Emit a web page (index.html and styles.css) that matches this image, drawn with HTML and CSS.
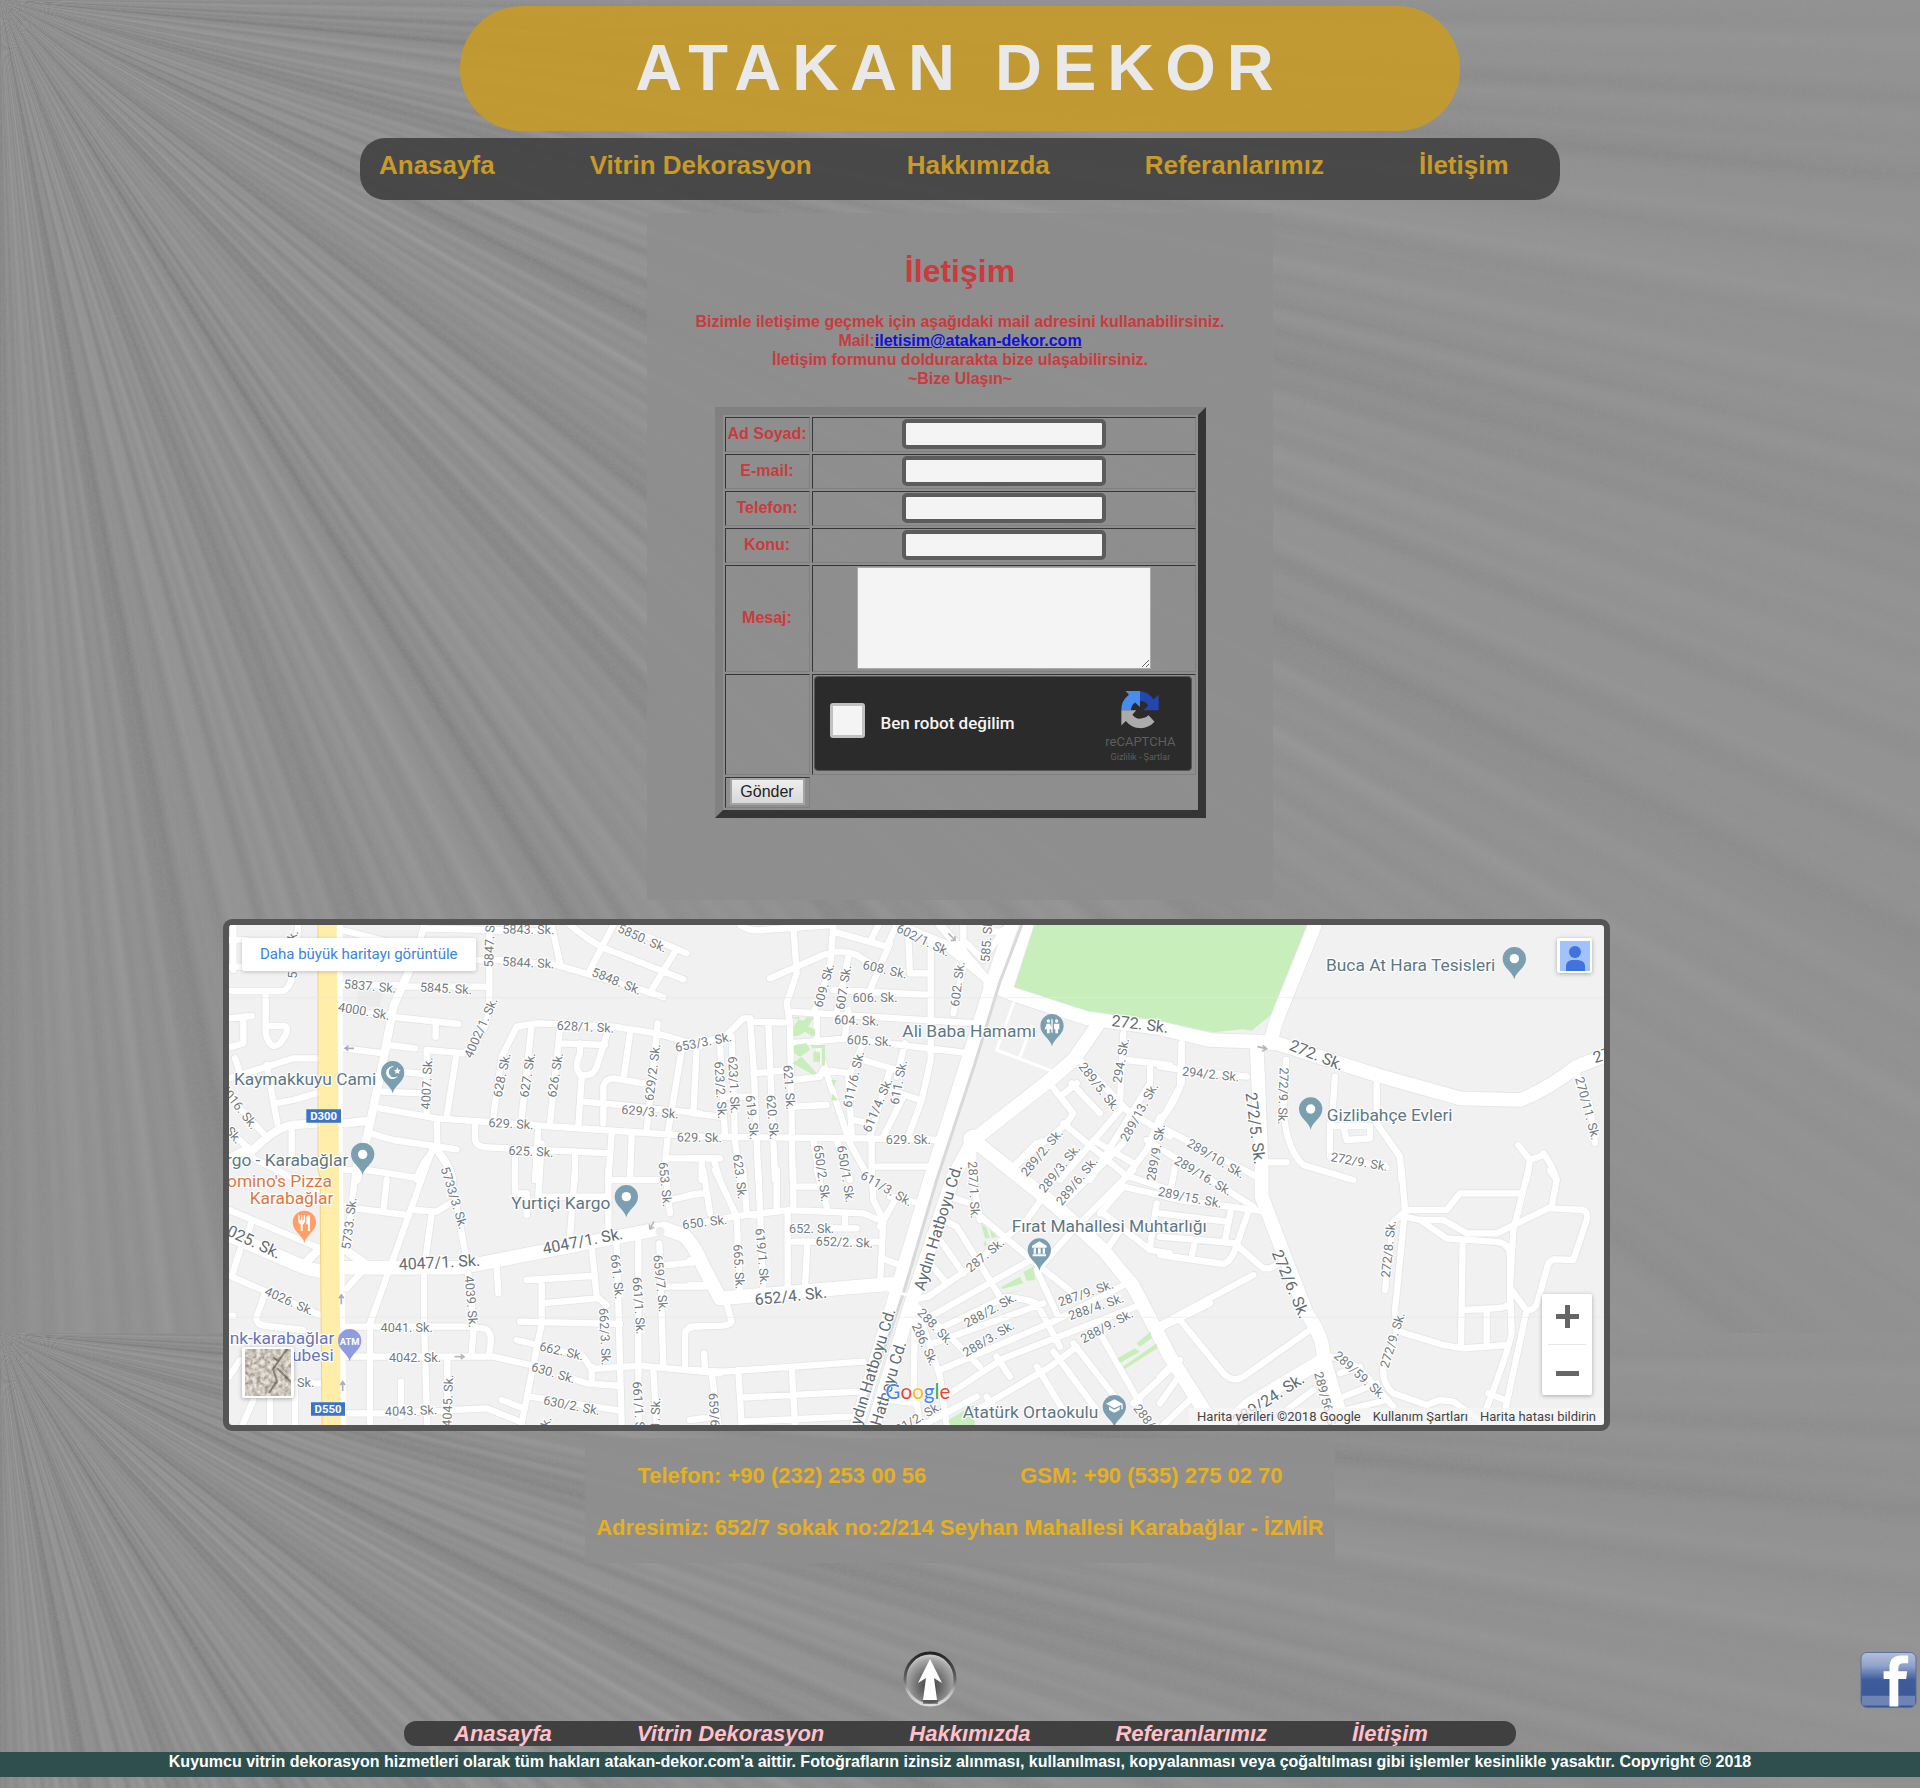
FILE: index.html
```html
<!DOCTYPE html>
<html lang="tr">
<head>
<meta charset="utf-8">
<title>Atakan Dekor - İletişim</title>
<link rel="stylesheet" href="styles.css">
</head>
<body>
<header class="banner"><h1>ATAKAN DEKOR</h1></header>

<nav class="main-nav">
  <a href="#">Anasayfa</a>
  <a href="#">Vitrin Dekorasyon</a>
  <a href="#">Hakkımızda</a>
  <a href="#">Referanlarımız</a>
  <a href="#">İletişim</a>
</nav>

<main>
  <section class="contact">
    <h2>İletişim</h2>
    <p>Bizimle iletişime geçmek için aşağıdaki mail adresini kullanabilirsiniz.<br>
    Mail:<a href="mailto:iletisim@atakan-dekor.com">iletisim@atakan-dekor.com</a><br>
    İletişim formunu doldurarakta bize ulaşabilirsiniz.<br>
    ~Bize Ulaşın~</p>
    <form>
      <table class="form-table">
        <tr><td class="name-cell"><label for="ad">Ad Soyad:</label></td><td class="field-cell"><input class="field" id="ad" type="text"></td></tr>
        <tr><td><label for="email">E-mail:</label></td><td><input class="field" id="email" type="text"></td></tr>
        <tr><td><label for="tel">Telefon:</label></td><td><input class="field" id="tel" type="text"></td></tr>
        <tr><td><label for="konu">Konu:</label></td><td><input class="field" id="konu" type="text"></td></tr>
        <tr class="message-row"><td><label for="mesaj">Mesaj:</label></td><td><textarea class="message" id="mesaj"></textarea></td></tr>
        <tr class="captcha-row"><td></td><td>
          <div class="captcha">
            <input type="checkbox" id="robot">
            <label for="robot">Ben robot değilim</label>
            <div class="captcha-brand">
              <svg viewBox="0 0 108 110" width="38" height="38" aria-hidden="true">
                <path fill="#4a8bee" d="M54 0H12L22 11A54 54 0 0 0 0 56H28A26 26 0 0 1 40 33L54 46Z"/>
                <path fill="#2546ad" d="M54 0A54 54 0 0 1 93 24L108 11V56H64L78 42Q70 29 54 29Z"/>
                <path fill="#ababab" d="M0 56H43L32 69Q44 84 60 79Q72 77 79 70L96 89A54 54 0 0 1 13 87L0 100Z"/>
              </svg>
              <span class="brand-name">reCAPTCHA</span>
              <span class="brand-terms">Gizlilik - Şartlar</span>
            </div>
          </div>
        </td></tr>
        <tr><td><button class="send" type="button">Gönder</button></td></tr>
      </table>
    </form>
  </section>

  <section class="map" aria-label="Harita">
    <svg class="map-canvas" viewBox="27 45 4125 1500" preserveAspectRatio="xMidYMid slice">
      <defs>
        <path id="pin" d="M0 62C-5 38-35 28-35 0A35 35 0 1 1 35 0C35 28 5 38 0 62Z"/>
        <g id="minor">
          <path d="M27 243H190Q215 230 220 180L235 45M27 90H80M40 45V180M27 170H70M137 243V370Q150 425 180 400Q220 345 185 348H140M27 325L95 318M70 320V400L27 412M27 505L220 445H296M45 445L60 490M140 465L172 640M165 580L220 570L296 548M27 560L130 670M27 660L85 715M215 650V740M80 735L190 790L300 840M365 60L560 110H600M612 45L590 130M615 55L1000 65M808 45V290Q800 380 730 430L620 420M770 150H840L1010 165L1250 235L1330 262M995 45L1020 160M1050 45Q1130 110 1180 125L1390 208M1180 45L1110 180M1260 70L1400 130M1365 125L1295 240M370 225H530M560 230H800M370 300L510 320L715 342M647 340V380M370 415L490 430M505 405L585 415M710 430L680 620M620 430V610M540 485L610 492M490 545L610 550M465 592L650 625L1150 660L1440 680M450 670L520 690L710 718M650 625L652 710Q600 760 590 810M645 710Q690 760 700 810M820 620L845 440L890 350L950 340L1180 350L1310 370L1440 408M935 345L905 620M1020 355L990 640M1020 400L1155 405M1080 400V430Q1060 480 1085 495Q1120 500 1130 470L1165 360M1085 500L1075 650M1230 370L1210 510M1313 340L1280 660M1090 575L1150 580L1440 610M1150 640V530Q1155 505 1180 505L1270 520M1385 420L1345 660L1330 810M765 640V690Q770 710 800 712L1170 730M955 650L945 810M885 730V810M1065 735V810M1175 670L1165 810M1235 675L1230 810M1340 745H1500"/>
          <path transform="translate(0 780)" d="M27 120L300 235M95 150L80 210M60 240L35 320L300 435M135 370L110 440Q105 465 140 468L250 480M27 437H40M370 470H740L790 475Q825 480 805 560M370 560H820L930 585M375 730H490L800 715L900 755M410 -30L380 240M500 30L490 125M375 0H440L600 25M640 -70L450 460V765M405 115L560 135M585 120L650 125L690 100M635 130L612 300V460L622 765M650 -60L690 0L740 270L762 460L755 550M830 290L835 370M885 0V70H920V135M1065 0L1050 200M965 -80L955 80H1160M1165 0V210M1170 30H1310M920 330L1115 318M1115 230L1130 380L1160 405M965 330V460L905 760M965 400L1130 385M900 455L1200 462M890 510L1090 560L1115 597M1115 597L1260 587L1500 610M1190 220L1205 765M1255 210V765M1318 220L1330 590M1115 590V635M1040 620L1100 640L1200 648M930 680L1200 722M845 690L910 715M1300 600L1310 765M1395 590V490Q1400 470 1440 468M1340 285L1440 275M1330 350H1470M682 570V765M543 635V740M150 690V765M225 650V765M100 690L70 760M27 620L60 570M380 355L440 290M1350 90L1440 70M1335 0L1350 130M230 640H305"/>
          <path transform="translate(1410 0)" d="M310 45L320 190L290 280L300 340L308 810M150 45Q180 65 220 60L420 45M240 205L400 135Q450 115 500 135L540 160M430 45L420 180L370 310M430 65L590 110L620 45M545 85L565 45M600 100L540 240M475 140L440 310M475 300L465 380M655 80L660 190H720M722 100V450L695 570L655 680M430 240L715 255M820 45V170L790 310M830 100L880 150L940 60M900 65H960M300 305L860 340M300 400L470 385L840 430M180 335L290 338M0 410L110 375L160 325H180L192 490L205 810M235 340L255 810M190 490L300 480M310 510L390 500L400 480L480 490M310 590L410 585M380 320V400L480 700L540 810M20 415L10 610L90 620M90 400L105 680M125 380L135 690L150 810M0 680L520 685L760 690M110 560H180M520 400L475 500L485 670M520 450L620 480M645 400L620 500M600 480L540 680M600 540L690 570M640 560L580 680M490 630L540 640M545 690V810M550 770H730M370 690L390 810M440 690L480 810M0 745H70L90 810M35 745V810M1075 515L1150 610L1130 640L960 780M1110 560L1160 520M1145 520L1230 610M1170 450L1310 600L1440 680M1290 600L1110 810M1310 450L1440 465M1300 370L1290 570M1380 470V520L1200 810M1120 640L1300 790M960 780L1040 700L1110 680M1210 690L1330 760M1410 620L1370 720L1300 810M850 700L850 810L870 930M1475 400V520L1410 640"/>
          <path transform="translate(1410 780)" d="M0 75L40 70M40 0L60 130M75 0L140 140L150 385M160 0L170 130M205 0L220 370M260 0V120M310 0V120M380 0L410 110M320 50H380M465 130V175H500M0 165L130 140L300 120L520 130L580 155L570 340M293 120V360M310 215H560M352 220L345 350M400 175H500M545 0L550 90L580 150M615 90L570 170M600 80L690 100M575 265L630 285M110 400L125 455Q120 465 100 467L0 470M0 600L100 605L520 575M42 550L45 600M65 610L85 765M145 600L155 765M305 590L315 765M155 683L500 665M155 755L480 740M0 750L80 740M0 345H50M0 270L30 265M690 385L715 380L830 300L1010 150L1060 80M760 150L800 170L930 380M750 210L820 310M720 280L770 340M780 80L840 100M860 130L1050 290L1150 370M1040 300L1100 430M720 440L1040 260M740 480L950 380L1010 390L1040 400L1110 530M730 520L1060 400M750 600L1090 455L1330 330M780 670L940 565L1350 405M670 400L760 480L870 590M675 420L670 700M690 440L750 620L770 765M600 690L680 700L690 765M860 720L1080 590L1160 530M920 560L960 620M1040 590L1120 720M1090 545L1220 720M1150 520L1290 700M1230 490L1350 700M1330 700L1470 570M1110 110L1300 -80M1060 280L1140 190L1330 0M1230 130L1300 50L1470 90M1240 130L1380 240L1440 250M1250 240L1290 180M1400 100L1380 230M1320 20L1440 60M890 680L920 730M700 765L860 680M1400 480L1560 400"/>
          <path transform="translate(2820 0)" d="M65 400L60 530Q40 590 0 630M0 470L75 480L260 500M378 450L370 600Q380 720 430 765L580 810M525 500L515 640M650 520V640L720 740L725 810M510 648H630V685L560 690L550 650M510 640V740L680 772M0 650L290 800M310 757H380M-40 690L200 840L280 890M1245 480L1290 590L1305 700M1075 705L1110 750L1150 735M1110 750L1100 810M1150 730Q1180 770 1190 810M45 770L30 850"/>
          <path transform="translate(2820 780)" d="M0 130L200 155M0 200L230 220M0 255L190 282Q215 275 230 225L270 110M105 210L95 260M215 110L195 210M60 90L320 125M230 225L310 295H330L350 285M0 465L280 315M60 450L190 610Q220 640 250 620L450 480M0 620L50 570M0 700L70 600M10 765L110 670M510 560Q580 570 620 620L700 710M540 610L600 590M550 680L650 640M560 720L680 690M470 600L510 765M380 720L460 660M725 0L735 120L705 420L710 490L670 590Q665 640 700 670L800 705L840 690L880 695L960 750M735 120H860L900 70H1085M735 125L700 155L675 360M735 140L780 150L860 205L1000 215Q1050 215 1050 260V400Q1040 415 1000 415L910 420M780 150H850L920 190H1010L1175 110L1190 30L1170 0M1105 0L1060 180L1050 350L1055 490Q1040 560 960 765M1175 115L1270 120Q1285 125 1280 150L1240 270L1180 268L1165 280L1130 405Q1110 430 1095 415L1055 360M1100 420L1040 700L1030 765M908 220L903 530M980 420V530M720 485L850 525L910 535L1040 525M985 670L1035 690"/>
        </g>
        <g id="medium">
          <path d="M590 130L520 290L490 450L450 640L410 810M85 735Q160 655 215 645L296 640M375 640L450 632M27 745L85 715M2160 45L2310 220M2035 45L2170 100L2310 215M260 1055L300 1015M370 1015L440 1065"/>
        </g>
        <g id="major">
          <path d="M27 975L260 1075L300 1083M370 1073H720L1310 958M1330 955L1390 975Q1420 1000 1450 1070L1500 1165L2030 1120M2375 45L2310 240L2130 810L1910 1545M2420 45L2355 245M2310 225L2385 255L2600 325L2820 355L2970 390L3110 395L3170 400L3470 495L3720 565L3900 570Q3980 540 4070 470L4160 435M2630 350L2560 450L2490 510L2260 690L2510 890L2650 1020L2740 1130L2850 1340L2980 1545M2260 690L2200 800L2080 1160L1960 1545M3285 45L3170 330L3150 400M3110 400L3125 780V860L3260 1210Q3310 1280 3310 1340L3370 1545M3310 1350L3090 1480L3020 1545"/>
          <circle cx="2260" cy="690" r="10"/>
        </g>
      </defs>
      <path class="park" d="M2435 45H3260L3165 305L3095 362L3070 358L2980 367L2820 335L2600 310L2380 240ZM2395 45H2410L2360 235L2345 225Z"/>
      <path class="block" d="M415 235H490L480 290H408Z"/>
      <use href="#minor" class="case case-minor"/>
      <use href="#medium" class="case case-medium"/>
      <use href="#major" class="case case-major"/>
      <use href="#minor" class="road road-minor"/>
      <use href="#medium" class="road road-medium"/>
      <use href="#major" class="road road-major"/>
      <g class="park">
        <path transform="translate(1410 0)" d="M302 322H330L310 350V378H325L345 365L365 378H375V358L355 350L372 322H350L340 332ZM312 405L350 400L360 420L330 440L312 430ZM365 405H405V465L395 470V415H365ZM370 425H390V455H370ZM307 460L335 440L380 490L370 495ZM425 510H440L430 530ZM425 550L445 570L425 572Z"/>
        <path transform="translate(1410 780)" d="M873 160L890 175L900 205H885ZM900 180L922 200L905 205ZM885 210L892 230L880 225ZM935 350L990 320L1000 340L935 358ZM1000 305L1030 290L1035 330L1010 332ZM940 372L1010 358L960 370ZM1282 565L1335 535L1350 545L1290 578ZM1340 520L1382 485L1385 505L1350 530ZM1298 590L1400 520L1402 535L1305 597ZM775 750L850 705L855 765H780Z"/>
      </g>
      <path class="rail" d="M2405 45L2340 215L2265 460L2150 810L2050 1150L1915 1545"/>
      <path class="road thin" d="M1985 1135L2100 1165M2380 280L2330 420L2500 485M2435 350L2400 440"/>
      <path class="road strip" d="M359 45V700L370 1545"/>
      <path fill="#ffeea9" d="M294 45H350L357 800L362 1545H306L300 800Z"/>
      <path class="orange" d="M294 45V780L300 800L306 1545"/>
      <path class="arrow" d="M402 415H375M385 408L375 415L385 422M364 1183V1155M357 1165L364 1155L371 1165M368 1443V1415M361 1425L368 1415L375 1425"/>
      <path class="arrow gray" d="M703 1340H732M722 1333L732 1340L722 1347M1302 935L1290 955M1288 943L1290 957L1302 952M2185 70L2205 90M2205 78V91H2192M3112 410L3138 416M3128 406L3140 416L3126 424"/>
      <circle class="island" cx="1320" cy="965" r="14"/>
      <path class="seam" d="M27 263H4152M27 1222H4152"/>

      <g class="street">
        <text transform="translate(925 58)rotate(1)">5843. Sk.</text><text transform="translate(1267 84)rotate(24)">5850. Sk.</text>
        <text transform="translate(925 158)rotate(3)">5844. Sk.</text><text transform="translate(808 94)rotate(-88)">5847. Sk.</text>
        <text transform="translate(218 75)rotate(-75)">k.</text><text transform="translate(217 195)rotate(-88)">5</text>
        <text transform="translate(450 228)rotate(5)">5837. Sk.</text><text transform="translate(678 235)rotate(3)">5845. Sk.</text>
        <text transform="translate(1190 213)rotate(22)">5848. Sk.</text><text transform="translate(432 303)rotate(10)">4000. Sk.</text>
        <text transform="translate(782 353)rotate(-66)">4002/1. Sk.</text><text transform="translate(1096 350)rotate(3)">628/1. Sk.</text>
        <text transform="translate(845 495)rotate(-78)">628. Sk.</text><text transform="translate(922 495)rotate(-81)">627. Sk.</text>
        <text transform="translate(1005 495)rotate(-81)">626. Sk.</text><text transform="translate(1297 487)rotate(-83)">629/2. Sk.</text>
        <text transform="translate(1290 605)rotate(5)">629/3. Sk.</text><text transform="translate(873 641)rotate(3)">629. Sk.</text>
        <text transform="translate(933 724)rotate(3)">625. Sk.</text><text transform="translate(620 520)rotate(-87)">4007. Sk.</text>
        <text transform="translate(57 590)rotate(52)">4016. Sk.</text><text transform="translate(42 675)rotate(50)">Sk.</text>
        <text transform="translate(1450 396)rotate(-11)">653/3. Sk.</text><text transform="translate(1438 682)rotate(1)">629. Sk.</text>
      </g>
      <g class="street" transform="translate(0 780)">
        <text transform="translate(703 83)rotate(73)">5733/3. Sk.</text><text transform="translate(387 160)rotate(-83)">5733. Sk.</text>
        <text transform="translate(1336 43)rotate(84)">653. Sk.</text><text transform="translate(1454 156)rotate(-7)">650. Sk.</text>
        <text transform="translate(208 393)rotate(24)">4026. Sk.</text><text transform="translate(560 472)">4041. Sk.</text>
        <text transform="translate(585 562)">4042. Sk.</text><text transform="translate(573 722)rotate(-2)">4043. Sk.</text>
        <text transform="translate(683 692)rotate(-88)">4045. Sk.</text><text transform="translate(754 395)rotate(85)">4039. Sk.</text>
        <text transform="translate(1192 320)rotate(84)">661. Sk.</text><text transform="translate(1257 407)rotate(86)">661/1. Sk.</text>
        <text transform="translate(1322 340)rotate(84)">659/7. Sk.</text><text transform="translate(1155 500)rotate(87)">662/3. Sk.</text>
        <text transform="translate(1025 543)rotate(13)">662. Sk.</text><text transform="translate(1000 608)rotate(17)">630. Sk.</text>
        <text transform="translate(1055 706)rotate(11)">630/2. Sk.</text><text transform="translate(1257 720)rotate(86)">661/1. Sk.</text>
        <text transform="translate(1305 750)rotate(-88)">661. Sk.</text><text transform="translate(978 755)rotate(-75)">k.</text>
        <text transform="translate(257 637)">Sk.</text>
      </g>
      <g class="street" transform="translate(1410 0)">
        <text transform="translate(700 90)rotate(26)">602/1. Sk.</text><text transform="translate(890 88)rotate(-86)">585. Sk.</text>
        <text transform="translate(585 178)rotate(13)">608. Sk.</text><text transform="translate(402 226)rotate(-74)">609. Sk.</text>
        <text transform="translate(460 232)rotate(-81)">607. Sk.</text><text transform="translate(555 263)">606. Sk.</text>
        <text transform="translate(802 222)rotate(-83)">602. Sk.</text><text transform="translate(500 331)rotate(2)">604. Sk.</text>
        <text transform="translate(538 392)rotate(3)">605. Sk.</text><text transform="translate(1292 452)rotate(-80)">294. Sk.</text>
        <text transform="translate(1228 530)rotate(52)">289/5. Sk.</text><text transform="translate(1347 606)rotate(-61)">289/13. Sk.</text>
        <text transform="translate(1055 727)rotate(-50)">289/2. Sk.</text><text transform="translate(1108 775)rotate(-51)">289/3. Sk.</text>
        <text transform="translate(1397 727)rotate(-80)">289/9. Sk.</text><text transform="translate(490 508)rotate(-77)">611/6. Sk.</text>
        <text transform="translate(562 585)rotate(-67)">611/4. Sk.</text><text transform="translate(625 517)rotate(-79)">611. Sk.</text>
        <text transform="translate(298 532)rotate(86)">621. Sk.</text><text transform="translate(248 622)rotate(85)">620. Sk.</text>
        <text transform="translate(187 622)rotate(84)">619. Sk.</text><text transform="translate(132 525)rotate(87)">623/1. Sk.</text>
        <text transform="translate(92 540)rotate(86)">623/2. Sk.</text><text transform="translate(655 688)">629. Sk.</text>
        <text transform="translate(150 800)rotate(83)">623. Sk.</text><text transform="translate(396 790)rotate(82)">650/2. Sk.</text>
        <text transform="translate(468 792)rotate(81)">650/1. Sk.</text>
      </g>
      <g class="street" transform="translate(1410 780)">
        <text transform="translate(590 55)rotate(30)">611/3. Sk.</text><text transform="translate(852 60)rotate(87)">287/1. Sk.</text>
        <text transform="translate(1160 33)rotate(-51)">289/6. Sk.</text><text transform="translate(365 175)">652. Sk.</text>
        <text transform="translate(463 216)rotate(2)">652/2. Sk.</text><text transform="translate(147 290)rotate(87)">665. Sk.</text>
        <text transform="translate(217 260)rotate(85)">619/1. Sk.</text><text transform="translate(885 255)rotate(-40)">287. Sk.</text>
        <text transform="translate(1187 369)rotate(-19)">287/9. Sk.</text><text transform="translate(1218 410)rotate(-19)">288/4. Sk.</text>
        <text transform="translate(1250 468)rotate(-28)">288/9. Sk.</text><text transform="translate(900 420)rotate(-29)">288/2. Sk.</text>
        <text transform="translate(895 506)rotate(-31)">288/3. Sk.</text><text transform="translate(737 470)rotate(46)">288. Sk.</text>
        <text transform="translate(705 523)rotate(65)">286. Sk.</text><text transform="translate(675 748)rotate(-30)">291/2. Sk.</text>
        <text transform="translate(75 755)rotate(86)">659/6. Sk.</text><text transform="translate(1392 775)rotate(52)">288/5. Sk.</text>
      </g>
      <g class="street" transform="translate(2820 0)">
        <text transform="translate(152 492)rotate(6)">294/2. Sk.</text><text transform="translate(370 558)rotate(92)">272/9. Sk.</text>
        <text transform="translate(168 745)rotate(31)">289/10. Sk.</text><text transform="translate(130 797)rotate(31)">289/16. Sk.</text>
        <text transform="translate(598 755)rotate(10)">272/9. Sk.</text><text transform="translate(1283 595)rotate(75)">270/11. Sk.</text>
      </g>
      <g class="street" transform="translate(2820 780)">
        <text transform="translate(90 82)rotate(11)">289/15. Sk.</text><text transform="translate(685 237)rotate(-84)">272/8. Sk.</text>
        <text transform="translate(697 510)rotate(-73)">272/9. Sk.</text><text transform="translate(600 615)rotate(42)">289/59. Sk.</text>
        <text transform="translate(500 700)rotate(75)">289/56. Sk.</text>
      </g>
      <g class="street avenue">
        <text transform="translate(90 990)rotate(25)">4025. Sk.</text><text transform="translate(658 1057)rotate(-3)">4047/1. Sk.</text>
        <text transform="translate(1088 993)rotate(-11)">4047/1. Sk.</text><text transform="translate(2760 342)rotate(7)">272. Sk.</text>
        <text transform="translate(1712 1158)rotate(-6)">652/4. Sk.</text><text transform="translate(3290 435)rotate(22)">272. Sk.</text>
        <text transform="translate(3106 655)rotate(83)">272/5. Sk.</text><text transform="translate(3212 1122)rotate(67)">272/6. Sk.</text>
        <text transform="translate(3145 1468)rotate(-33)">289/24. Sk.</text><text transform="translate(4146 436)rotate(-17)">27</text>
        <text transform="translate(2154 952)rotate(-73)">Aydın Hatboyu Cd.</text><text transform="translate(1954 1384)rotate(-73)">Aydın Hatboyu Cd.</text>
        <text transform="translate(2005 1420)rotate(-73)">Hatboyu Cd.</text>
      </g>

      <g class="poi">
        <text x="42" y="525">Kaymakkuyu Cami</text>
        <text x="385" y="768" text-anchor="end">Kargo - Karabağlar</text>
        <text x="874" y="897">Yurtiçi Kargo</text>
        <text x="2047" y="382">Ali Baba Hamamı</text>
        <text x="3318" y="182">Buca At Hara Tesisleri</text>
        <text x="3320" y="633">Gizlibahçe Evleri</text>
        <text x="2375" y="965">Fırat Mahallesi Muhtarlığı</text>
        <text x="2228" y="1525">Atatürk Ortaokulu</text>
        <g class="food"><text x="336" y="831" text-anchor="end">Domino's Pizza</text><text x="340" y="882" text-anchor="end">Karabağlar</text></g>
        <g class="bank"><text x="343" y="1302" text-anchor="end">Denizbank-karabağlar</text><text x="341" y="1353" text-anchor="end">şubesi</text></g>
      </g>
      <g fill="#7b9eb0">
        <use href="#pin" x="518" y="488"/><use href="#pin" x="428" y="733"/><use href="#pin" x="1219" y="860"/>
        <use href="#pin" x="2496" y="347"/><use href="#pin" x="3883" y="146"/><use href="#pin" x="3272" y="597"/>
        <use href="#pin" x="2458" y="1020"/><use href="#pin" x="2683" y="1490"/>
      </g>
      <use href="#pin" x="253" y="937" fill="#ff9e67"/><use href="#pin" x="389" y="1292" fill="#909ce1"/>
      <g fill="#fff">
        <circle cx="428" cy="733" r="14"/><circle cx="1219" cy="860" r="14"/><circle cx="3883" cy="146" r="14"/><circle cx="3272" cy="597" r="14"/>
        <path d="M523 470A19 19 0 1 0 534 497A16 16 0 1 1 523 470ZM532 472L535 479L542 480L537 485L538 492L532 488L526 492L527 485L522 480L529 479Z"/>
        <circle cx="2485" cy="333" r="5"/><path d="M2480 341H2490L2496 358H2489V370H2481V358H2474ZM2494 328H2498V368H2494Z"/><circle cx="2510" cy="333" r="5"/><path d="M2502 341H2518V358H2514V370H2506V358H2502Z"/>
        <path d="M2436 1007L2458 994L2480 1007V1013H2436ZM2441 1015H2448V1031H2441ZM2454 1015H2462V1031H2454ZM2468 1015H2475V1031H2468ZM2438 1033H2478V1039H2438Z"/>
        <path d="M2683 1468L2708 1481V1498H2704V1484L2683 1495L2658 1481ZM2667 1490L2683 1499L2699 1490V1500L2683 1508L2667 1500Z"/>
        <path d="M235 916H239V931H243V916H247V931H251V916H255V934Q254 942 248 944V963H242V944Q235 942 235 934ZM259 920Q262 914 270 916V963H264V943H259Z"/>
        <text class="atm" x="389" y="1304">ATM</text>
      </g>
      <g class="shield"><path d="M259 598H363V638H259ZM273 1477H375V1517H273Z"/><text x="311" y="630">D300</text><text x="324" y="1509">D550</text></g>
      <text class="google" x="1996" y="1467"><tspan fill="#4285f4">G</tspan><tspan fill="#ea4335">o</tspan><tspan fill="#fbbc05">o</tspan><tspan fill="#4285f4">g</tspan><tspan fill="#34a853">l</tspan><tspan fill="#ea4335">e</tspan></text>
    </svg>
    <a class="map-larger" href="#">Daha büyük haritayı görüntüle</a>
    <button class="map-user" type="button" aria-label="Oturum">
      <svg viewBox="0 0 30 30" width="30" height="30"><path fill="#a1c2fa" d="M0 0H30V30H0Z"/><circle cx="15" cy="11" r="6" fill="#4272db"/><path fill="#4272db" d="M6 30V25Q6 20 12 19H18Q25 20 25 25V30Z"/></svg>
    </button>
    <button class="map-satellite" type="button" aria-label="Uydu görünümü">
      <svg viewBox="0 0 46 47" width="46" height="47"><filter id="ground" x="0" y="0" width="1" height="1"><feTurbulence type="fractalNoise" baseFrequency=".25" numOctaves="4" seed="4"/><feColorMatrix values=".9 0 0 0 .15 .9 0 0 0 .11 .9 0 0 0 .05 0 0 0 0 1"/></filter><path filter="url(#ground)" d="M0 0H46V47H0Z"/><path fill="none" stroke="#5a5044" stroke-opacity=".6" stroke-width="2" d="M42 0L28 20L32 32L24 44M32 19L46 33M28 8L33 12"/></svg>
    </button>
    <div class="map-zoom"><button type="button" aria-label="Yakınlaştır"><svg viewBox="0 0 23 23" width="23" height="23"><path fill="#666" d="M9 0H14V9H23V14H14V23H9V14H0V9H9Z"/></svg></button><button type="button" aria-label="Uzaklaştır"><svg viewBox="0 0 23 23" width="23" height="23"><path fill="#666" d="M0 9H23V14H0Z"/></svg></button></div>
    <div class="map-credits"><span>Harita verileri ©2018 Google</span><a href="#">Kullanım Şartları</a><a href="#">Harita hatası bildirin</a></div>
  </section>

  <section class="info">
    <div class="phones"><span>Telefon: +90 (232) 253 00 56</span><span>GSM: +90 (535) 275 02 70</span></div>
    <div>Adresimiz: 652/7 sokak no:2/214 Seyhan Mahallesi Karabağlar - İZMİR</div>
  </section>
</main>

<footer>
  <div class="icons">
    <a class="to-top" href="#" aria-label="Yukarı">
      <svg viewBox="0 0 54 56" width="54" height="56">
        <defs>
          <radialGradient id="ball" cx=".5" cy=".62" r=".62"><stop offset="0" stop-color="#3c3c3c"/><stop offset=".35" stop-color="#686868"/><stop offset=".8" stop-color="#a8a8a8"/><stop offset="1" stop-color="#d8d8d8"/></radialGradient>
          <linearGradient id="rim" x2="0" y2="1"><stop offset="0" stop-color="#222"/><stop offset=".5" stop-color="#666"/><stop offset=".75" stop-color="#bbb"/><stop offset="1" stop-color="#ddd"/></linearGradient>
        </defs>
        <ellipse cx="27" cy="28" rx="25" ry="26" fill="url(#ball)" stroke="url(#rim)" stroke-width="3"/>
        <path fill="#333" opacity=".5" d="M20 49H35V53H20Z"/>
        <path fill="#fff" d="M27 8L39 32L31 27L34 49H20L23 27L15 32Z"/>
      </svg>
    </a>
    <a href="#" aria-label="Facebook">
      <svg viewBox="0 0 58 58" width="57" height="58">
        <defs><linearGradient id="fb" x2="0" y2="1"><stop offset="0" stop-color="#b3bfdc"/><stop offset=".25" stop-color="#8fa1ca"/><stop offset=".5" stop-color="#3e5b9b"/><stop offset="1" stop-color="#3a5795"/></linearGradient></defs>
        <rect x="1" y="1" width="56" height="56" rx="6" fill="url(#fb)" stroke="#5d6f9b"/>
        <path fill="#6d84b4" d="M2 45H56V55H2Z"/>
        <path fill="#fff" d="M30 56V28H24V20H30V16Q30 4 42 4H49V12H44Q39 12 39 17V20H48L47 28H39V56Z"/>
      </svg>
    </a>
  </div>
  <nav class="foot-nav">
    <a href="#">Anasayfa</a>
    <a href="#">Vitrin Dekorasyon</a>
    <a href="#">Hakkımızda</a>
    <a href="#">Referanlarımız</a>
    <a href="#">İletişim</a>
  </nav>
  <div class="copyright">Kuyumcu vitrin dekorasyon hizmetleri olarak tüm hakları atakan-dekor.com'a aittir. Fotoğrafların izinsiz alınması, kullanılması, kopyalanması veya çoğaltılması gibi işlemler kesinlikle yasaktır. Copyright © 2018</div>
</footer>
</body>
</html>
```
FILE: styles.css
```css
* { box-sizing: border-box; }

body {
  margin: 0;
  padding: 6px 0 11px;
  font: bold 16px/19px "Liberation Sans", Arial, sans-serif;
  background-color: #8f8f8f;
  background-image:
    url("data:image/svg+xml,%3Csvg xmlns='http://www.w3.org/2000/svg' width='400' height='400'%3E%3Cfilter id='n'%3E%3CfeTurbulence type='fractalNoise' baseFrequency='.3 .4' numOctaves='3' stitchTiles='stitch'/%3E%3CfeColorMatrix values='0 0 0 0 .3 0 0 0 0 .3 0 0 0 0 .3 .8 0 0 0 -.33'/%3E%3C/filter%3E%3Crect width='400' height='400' filter='url(%23n)'/%3E%3C/svg%3E"),
    radial-gradient(circle at 0 0, rgba(147, 147, 147, 0) 0, rgba(147, 147, 147, .35) 900px, rgba(147, 147, 147, .7) 1900px),
    repeating-conic-gradient(from 90deg at 0 0, rgba(255, 255, 255, .06) 0deg, rgba(0, 0, 0, .05) .7deg, rgba(255, 255, 255, .03) 1.2deg, rgba(0, 0, 0, .01) 1.9deg, rgba(255, 255, 255, .06) 2.3deg),
    repeating-conic-gradient(from 90deg at 0 0, rgba(0, 0, 0, .06) 0deg, rgba(255, 255, 255, .04) 1.3deg, rgba(0, 0, 0, .03) 2.8deg, rgba(255, 255, 255, .05) 3.4deg, rgba(0, 0, 0, .06) 5.3deg),
    repeating-conic-gradient(from 90deg at 0 0, rgba(255, 255, 255, .04) 0deg, rgba(0, 0, 0, .05) 4deg, rgba(0, 0, 0, 0) 7deg, rgba(255, 255, 255, .04) 10.7deg);
  background-size: 400px 400px, 100% 1333px, 100% 1333px, 100% 1333px, 100% 1333px;
}

a { text-decoration: none; }

.banner {
  max-width: 1000px;
  height: 125px;
  margin: 0 auto;
  border-radius: 62px;
  background: rgba(199, 155, 38, .88);
  text-align: center;
}

.banner h1 {
  margin: 0;
  padding-top: 26px;
  font-size: 65px;
  line-height: 72px;
  letter-spacing: 11px;
  color: #e9e9e9;
}

.main-nav {
  display: flex;
  gap: 95px;
  max-width: 1200px;
  height: 62px;
  margin: 7px auto 0;
  padding: 12px 19px 0;
  border-radius: 25px;
  background: rgba(64, 64, 64, .9);
  font-size: 26px;
  line-height: 30px;
}

.main-nav a { color: #c89a2a; }

.contact {
  max-width: 626px;
  margin: 13px auto 0;
  padding: 39px 0 82px;
  background: rgba(142, 142, 142, .9);
  color: #cb3a3c;
  text-align: center;
}

.contact h2 { margin: 0 0 22px; font-size: 32px; line-height: 38px; }
.contact p { margin: 0 0 19px; }
.contact p a { color: #1010e0; text-decoration: underline; }

.form-table {
  width: 491px;
  margin: 0 auto;
  border: 8px solid;
  border-color: #818181 #353535 #353535 #818181;
  border-spacing: 2px;
}

.form-table td {
  height: 35px;
  padding: 0 1px 2px;
  border: 1px solid;
  border-color: #353535 #808080 #808080 #353535;
}

.form-table .name-cell { width: 85px; }
.form-table .message-row td { height: 107px; }
.form-table .captcha-row td { height: 101px; vertical-align: top; padding-top: 1px; }
.form-table tr:last-child td { height: 31px; }

.field {
  display: block;
  width: 204px;
  height: 30px;
  margin: 0 auto;
  border: 4px solid #5c5c5c;
  border-radius: 5px;
  background: #f4f4f4;
}

.message {
  display: block;
  width: 294px;
  height: 102px;
  margin: 0 auto;
  border: 1px solid #aaa;
  background: #f4f4f4;
}

.captcha {
  display: flex;
  align-items: center;
  width: 378px;
  height: 95px;
  padding: 0 15px;
  border: 1px solid #555;
  border-radius: 4px;
  background: #2b2b2b;
  font-family: Roboto, sans-serif;
  font-weight: 400;
  color: #f4f4f4;
}

.captcha input {
  appearance: none;
  width: 35px;
  height: 35px;
  margin: 0 16px 6px 0;
  border: 3px solid #c1c1c1;
  border-radius: 3px;
  background: #f4f4f4;
}

.captcha label { font-size: 17px; font-weight: 500; }
.captcha-brand { display: flex; flex-direction: column; align-items: center; margin-left: auto; padding-top: 8px; color: #5e5e5e; }
.brand-name { padding-top: 4px; font-size: 13px; line-height: 17px; }
.brand-terms { font-size: 9px; line-height: 15px; }

.send {
  width: 75px;
  height: 27px;
  padding: 0;
  border: 2px solid #a4a4a4;
  background: linear-gradient(#eee, #d8d8d8);
  font: 16px/19px "Liberation Sans", Arial, sans-serif;
  color: #222;
}

.map {
  position: relative;
  height: 512px;
  margin: 19px 310px 0 223px;
  border: 6px solid #555;
  border-radius: 9px;
  background: #f1f1f1;
  overflow: hidden;
  font-family: Roboto, sans-serif;
  font-weight: 400;
}

.map-canvas { display: block; width: 100%; height: 100%; }
.park { fill: #c8efbb; }
.block { fill: #ebebeb; }
.case, .road { fill: none; stroke-linejoin: round; stroke-linecap: round; }
.case { stroke: #e4e5e6; }
.road { stroke: #fff; }
.case-minor { stroke-width: 24px; }
.road-minor { stroke-width: 19px; }
.case-medium { stroke-width: 30px; }
.road-medium { stroke-width: 25px; }
.case-major { stroke-width: 46px; }
.road-major { stroke-width: 41px; }
.thin { stroke-width: 9px; }
.strip { stroke-width: 18px; stroke-linecap: butt; }
.rail { fill: none; stroke: #d7d9db; stroke-width: 9px; }
.orange { fill: none; stroke: #fbd071; stroke-width: 3px; }
.arrow { fill: none; stroke: #a9abc9; stroke-width: 5px; }
.gray { stroke: #b4b8ba; }
.island { fill: #eee; }
.seam { stroke: #e9e9e9; stroke-width: 2px; }

.street text {
  font-size: 38px;
  fill: #737b7f;
  stroke: #fff;
  stroke-width: 7px;
  paint-order: stroke;
  text-anchor: middle;
  dominant-baseline: central;
}

.avenue text { font-size: 48px; fill: #626d72; }

.poi text {
  font-size: 52px;
  fill: #5d7884;
  stroke: #fff;
  stroke-width: 7px;
  paint-order: stroke;
}

.poi .food text { fill: #d9783f; }
.poi .bank text { fill: #6a74b6; }
.atm { font-size: 28px; font-weight: 700; text-anchor: middle; }
.shield path { fill: #3b74c6; }
.shield text { fill: #fff; font-size: 34px; font-weight: 700; text-anchor: middle; }
.google { font-family: Lato, sans-serif; font-size: 62px; font-weight: 400; stroke: #fff; stroke-width: 4px; paint-order: stroke; }

.map-larger {
  position: absolute;
  top: 13px;
  left: 13px;
  padding: 0 18px;
  border-radius: 2px;
  background: #fff;
  box-shadow: 0 1px 4px rgba(0, 0, 0, .2);
  font-size: 15px;
  line-height: 33px;
  color: #3a84df;
}

.map button { display: flex; align-items: center; justify-content: center; padding: 0; border: 0; background: #fff; }

.map .map-user,
.map .map-satellite {
  position: absolute;
  box-shadow: 0 1px 4px rgba(0, 0, 0, .3);
  border-radius: 2px;
}

.map .map-user { top: 13px; right: 12px; width: 35px; height: 35px; }
.map .map-satellite { left: 13px; bottom: 27px; width: 52px; height: 51px; }

.map-zoom {
  position: absolute;
  right: 12px;
  bottom: 30px;
  width: 50px;
  padding: 0 6px;
  border-radius: 2px;
  background: #fff;
  box-shadow: 0 1px 4px rgba(0, 0, 0, .3);
}

.map .map-zoom button { width: 100%; height: 50px; padding-top: 6px; }
.map .map-zoom button:first-child { height: 51px; padding: 0 0 5px; border-bottom: 1px solid #e6e6e6; }

.map-credits {
  position: absolute;
  right: 0;
  bottom: 0;
  display: flex;
  gap: 12px;
  padding: 0 8px;
  background: rgba(245, 245, 245, .75);
  font-size: 13px;
  line-height: 17px;
  color: #444;
}

.map-credits a { color: #444; }

.info {
  max-width: 750px;
  height: 125px;
  margin: 7px auto 0;
  padding-top: 24px;
  background: rgba(142, 142, 142, .88);
  font-size: 22px;
  line-height: 28px;
  text-align: center;
  white-space: nowrap;
  color: #e5b022;
}

.phones { display: flex; justify-content: center; gap: 94px; margin-bottom: 24px; }

.icons { display: flex; margin-top: 88px; padding-right: 3px; }
.icons a { display: block; height: 58px; }
.icons .to-top { margin: 0 auto; }

.foot-nav {
  display: flex;
  gap: 85px;
  max-width: 1112px;
  margin: 12px auto 6px;
  padding-left: 50px;
  border-radius: 12px;
  background: #404040;
  font-size: 22px;
  font-style: italic;
  line-height: 25px;
}

.foot-nav a { color: #ffc0cb; }

.copyright {
  padding-bottom: 6px;
  background: #2f4f4f;
  text-align: center;
  color: #fff;
}
```
